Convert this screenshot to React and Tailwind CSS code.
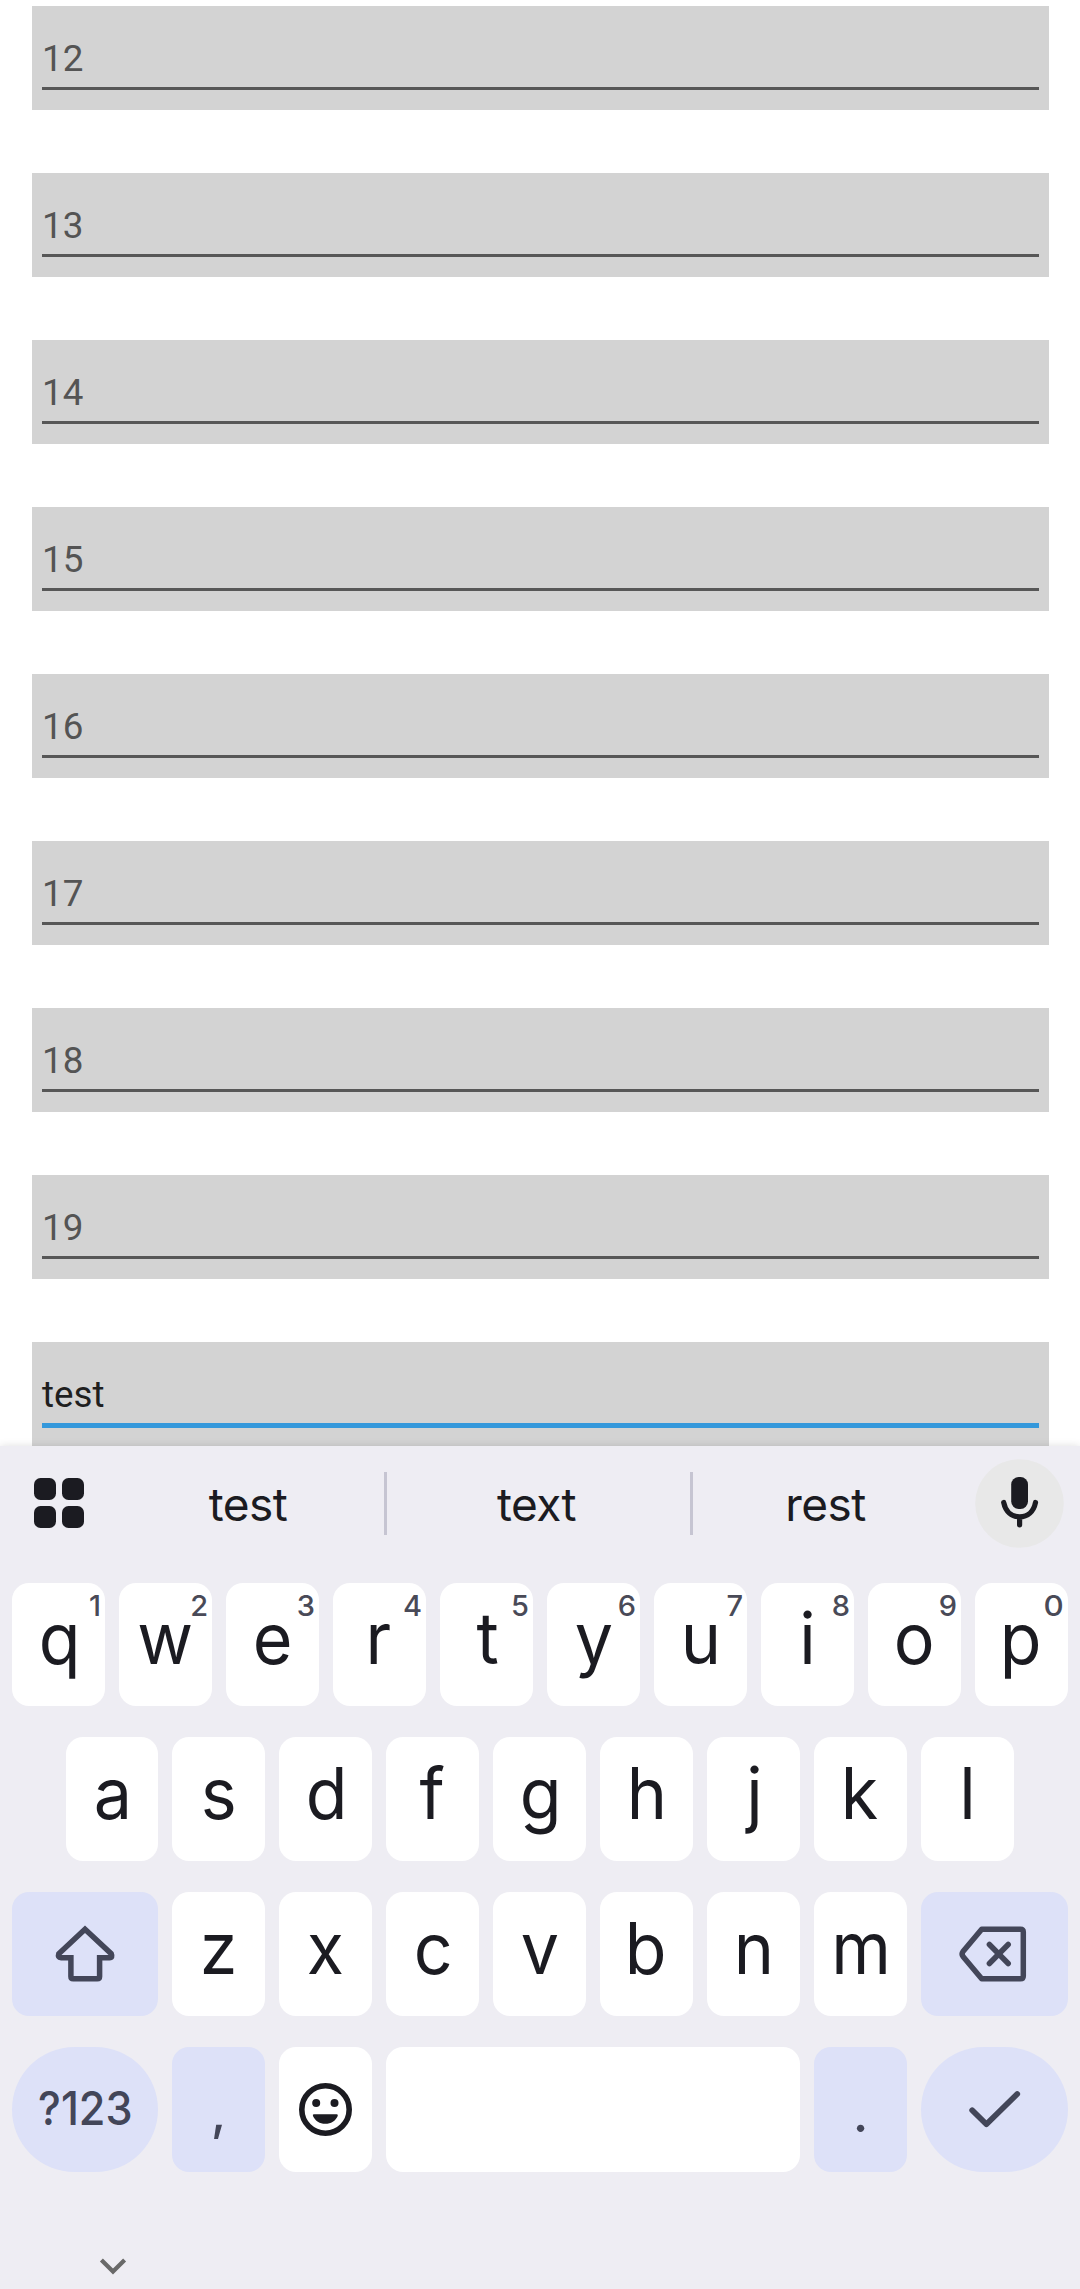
import React from "react";

const fields = ["12", "13", "14", "15", "16", "17", "18", "19"];
const row1 = ["q", "w", "e", "r", "t", "y", "u", "i", "o", "p"];
const row2 = ["s", "d", "f", "g", "h", "j", "k", "l"];
const row3 = ["z", "x", "c", "v", "b", "n", "m"];

// Horizontal optical adjustments for glyphs that sit off centre.
const nudge = {
  q: "translate-x-[1px]",
  a: "translate-x-[1px]",
  d: "translate-x-[1px]",
  g: "translate-x-[1px]",
  t: "translate-x-[1px]",
  j: "translate-x-[1px]",
  c: "translate-x-[1px]",
  m: "translate-x-[1px]",
  r: "-translate-x-[1px]",
  k: "-translate-x-[1px]",
  p: "-translate-x-[1px]",
  b: "-translate-x-[1px]",
};

function Field({ text }) {
  return (
    <div className="h-[104px] shrink-0 bg-[#d3d3d3] px-[10px] text-[36.75px] text-[#545454]">
      <div className="h-[81px] leading-[106px]">{text}</div>
      <div className="h-[3px] bg-[#575757]" />
    </div>
  );
}

function Key({ children, hint, className = "" }) {
  return (
    <div className={"relative h-full w-[93px] shrink-0 rounded-[17px] bg-white text-center text-[71px] " + className}>
      {children}
      {hint && (
        <span className={"absolute right-[4px] top-[7px] text-[29px] font-medium leading-[32px] text-[#494a57] " + (hint === "0" ? "origin-right scale-x-[1.08]" : "")}>
          {hint}
        </span>
      )}
    </div>
  );
}

function Letter({ children }) {
  return <span className={"inline-block scale-x-[0.96] " + (nudge[children] || "")}>{children}</span>;
}

function Suggestion({ children, className }) {
  return <div className={"shrink-0 text-center text-[46px] leading-[116px] tracking-[-0.6px] " + className}>{children}</div>;
}

export default function App() {
  return (
    <div className="flex h-[2289px] w-[1080px] flex-col overflow-hidden bg-white">
      <div className="flex h-[1446px] shrink-0 flex-col gap-[63px] overflow-hidden pl-8 pt-[6px] pr-[31px] font-['Roboto',sans-serif]">
        {fields.map((f) => (
          <Field key={f} text={f} />
        ))}
        <div className="h-[104px] shrink-0 bg-[#d3d3d3] px-[10px] text-[36.75px] text-[#1f1f1f]">
          <div className="h-[81px] leading-[106px]">test</div>
          <div className="h-[5px] bg-[#3498db]" />
        </div>
      </div>

      <div className="flex h-[843px] flex-col bg-[#eeedf3] font-['Inter',sans-serif] text-[#1b1b21] shadow-[0_0_8px_rgba(0,0,0,0.13)]">
        <div className="flex h-[137px] shrink-0 items-start">
          <div className="ml-[34px] mt-[32px] grid shrink-0 grid-cols-2 gap-[6px]">
            {[0, 1, 2, 3].map((i) => (
              <div key={i} className="size-[22px] rounded-[6.5px] bg-[#1b1b21]" />
            ))}
          </div>
          <Suggestion className="ml-[28px] w-[272px]">test</Suggestion>
          <div className="mt-[26px] h-[63px] w-[3px] bg-[#c6c5d2]" />
          <Suggestion className="w-[303px] pr-[4px]">text</Suggestion>
          <div className="mt-[26px] h-[63px] w-[3px] bg-[#c6c5d2]" />
          <Suggestion className="w-[268px] pr-[3px]">rest</Suggestion>
          <svg className="ml-[14px] mt-[13px] size-[89px] shrink-0" viewBox="975 1459 89 89" fill="none">
            <circle cx="1019.5" cy="1503.5" r="44.3" fill="#e8e8e8" />
            <rect x="1011.2" y="1477" width="16.8" height="32" rx="7.5" fill="#1b1b21" />
            <path d="M1003.7 1502.5 C1005.5 1511.5 1011.5 1516.8 1019.6 1516.8 S1033.7 1511.5 1035.5 1502.5 M1019.6 1517 V1524.8" stroke="#1b1b21" strokeWidth="5.2" strokeLinecap="round" />
          </svg>
        </div>

        <div className="flex h-[123px] shrink-0 gap-[14px] px-3 leading-[111px]">
          {row1.map((k, i) => (
            <Key key={k} hint={String((i + 1) % 10)}>
              <Letter>{k}</Letter>
            </Key>
          ))}
        </div>

        <div className="mt-[31px] flex h-[124px] shrink-0 gap-[14px] pl-[66px] leading-[113px]">
          <Key className="w-[92px]!">
            <Letter>a</Letter>
          </Key>
          {row2.map((k) => (
            <Key key={k}>
              <Letter>{k}</Letter>
            </Key>
          ))}
        </div>

        <div className="mt-[31px] flex h-[124px] shrink-0 gap-[14px] px-3 leading-[113px]">
          <div className="flex w-[146px] shrink-0 items-center justify-center rounded-[17px] bg-[#dde1f8]">
            <svg className="size-16" viewBox="53 1922 64 64" fill="none" stroke="#434659" strokeWidth="5.5">
              <path d="M85 1929.2 L111.2 1953.7 Q113 1957.7 109.5 1957.7 H99.6 V1976.5 Q99.6 1978.8 97.3 1978.8 H73.2 Q70.9 1978.8 70.9 1976.5 V1957.7 H61 Q57.5 1957.7 58.8 1953.7 Z" />
            </svg>
          </div>
          {row3.map((k) => (
            <Key key={k}>
              <Letter>{k}</Letter>
            </Key>
          ))}
          <div className="flex w-[147px] shrink-0 items-center justify-center rounded-[17px] bg-[#dde1f8]">
            <svg className="h-16 w-[75px]" viewBox="957 1922 75 64" fill="none" stroke="#434659" strokeWidth="5.5" strokeLinejoin="round">
              <path d="M981.7 1929.2 H1020.5 Q1023.3 1929.2 1023.3 1932 V1976 Q1023.3 1978.8 1020.5 1978.8 H981.7 L963 1956.5 Q961.2 1954 963 1951.5 Z" />
              <path d="M989.4 1944.5 L1008.2 1963.5 M1008.2 1944.5 L989.4 1963.5" strokeLinecap="round" />
            </svg>
          </div>
        </div>

        <div className="mt-[31px] flex h-[125px] shrink-0 gap-[14px] px-3 text-[#434659]">
          <div className="w-[146px] shrink-0 rounded-full bg-[#dde1f8] text-center text-[47px] font-medium leading-[122px]">
            <span className="inline-block scale-x-[0.92]">?123</span>
          </div>
          <Key className="bg-[#dde1f8]! text-[50px]! font-medium leading-[130px]">,</Key>
          <Key>
            <svg className="ml-[18px] mt-[34px] h-[57px] w-[57px]" viewBox="297 2081 57 57" fill="none">
              <circle cx="325.5" cy="2109.5" r="23.7" stroke="#1b1b21" strokeWidth="5.6" />
              <circle cx="316.2" cy="2103" r="4" fill="#1b1b21" />
              <circle cx="334.5" cy="2103" r="4" fill="#1b1b21" />
              <path d="M313.8 2114.3 H336.8 Q338.3 2114.3 337.7 2116 C335.5 2121 331 2123.8 325.3 2123.8 S315.2 2121 313 2116 Q312.3 2114.3 313.8 2114.3 Z" fill="#1b1b21" />
            </svg>
          </Key>
          <Key className="w-[414px]!" />
          <Key className="bg-[#dde1f8]! text-[56px]! leading-[131px]">.</Key>
          <div className="w-[147px] shrink-0 rounded-full bg-[#dde1f8]">
            <svg className="ml-[44px] mt-[38px] h-[50px] w-[60px]" viewBox="965 2085 60 50" fill="none" stroke="#434659" strokeWidth="5.8" strokeLinecap="round" strokeLinejoin="round">
              <path d="M972.2 2110.3 L986.4 2124.3 L1017.2 2094" />
            </svg>
          </div>
        </div>

        <svg className="ml-[98px] mt-[84px] h-[22px] w-[30px] shrink-0" viewBox="98 2256 30 22" fill="none" stroke="#696969" strokeWidth="4.2">
          <path d="M101.4 2259.9 L113 2271.6 L124.6 2259.9" />
        </svg>
      </div>
    </div>
  );
}
